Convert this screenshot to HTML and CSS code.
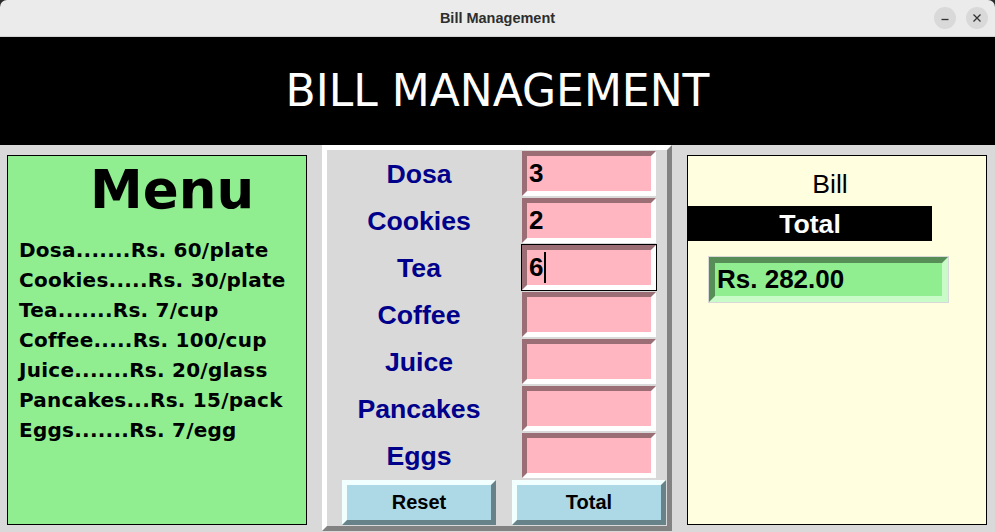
FILE: index.html
```html
<!DOCTYPE html>
<html>
<head>
<meta charset="utf-8">
<title>Bill Management</title>
<link rel="stylesheet" href="styles.css">
</head>
<body>
<div class="titlebar">
  <span class="title">Bill Management</span>
  <div class="wbtns">
    <span class="wbtn"><svg width="10" height="10" viewBox="0 0 10 10"><path d="M1.5 6.5h7" stroke="#333" stroke-width="1.3"/></svg></span>
    <span class="wbtn"><svg width="10" height="10" viewBox="0 0 10 10"><path d="M1.5 1.5l7 7M8.5 1.5l-7 7" stroke="#333" stroke-width="1.3"/></svg></span>
  </div>
</div>
<header class="banner">BILL MANAGEMENT</header>
<main class="main">
  <section class="menu">
    <div class="menu-title">Menu</div>
    <ul class="menu-list">
      <li>Dosa.......Rs. 60/plate</li>
      <li>Cookies.....Rs. 30/plate</li>
      <li>Tea.......Rs. 7/cup</li>
      <li>Coffee.....Rs. 100/cup</li>
      <li>Juice.......Rs. 20/glass</li>
      <li>Pancakes...Rs. 15/pack</li>
      <li>Eggs.......Rs. 7/egg</li>
    </ul>
  </section>
  <section class="order">
    <div class="lbl">Dosa</div><div class="cell"><div class="entry"><div class="field">3</div></div></div>
    <div class="lbl">Cookies</div><div class="cell"><div class="entry"><div class="field">2</div></div></div>
    <div class="lbl">Tea</div><div class="cell"><div class="entry focus"><div class="field">6<span class="caret"></span></div></div></div>
    <div class="lbl">Coffee</div><div class="cell"><div class="entry"><div class="field"></div></div></div>
    <div class="lbl">Juice</div><div class="cell"><div class="entry"><div class="field"></div></div></div>
    <div class="lbl">Pancakes</div><div class="cell"><div class="entry"><div class="field"></div></div></div>
    <div class="lbl">Eggs</div><div class="cell"><div class="entry"><div class="field"></div></div></div>
    <div class="bcell first"><button class="btn">Reset</button></div>
    <div class="bcell"><button class="btn">Total</button></div>
  </section>
  <section class="bill">
    <div class="bill-title">Bill</div>
    <div class="bill-head">Total</div>
    <div class="result"><div class="result-field">Rs. 282.00</div></div>
  </section>
</main>
</body>
</html>
```
FILE: styles.css
```css
* { box-sizing: border-box; }
html, body { margin: 0; padding: 0; }
html { background: #2a2a2a; }
body {
  width: 995px;
  height: 532px;
  overflow: hidden;
  font-family: "Liberation Sans", Arial, sans-serif;
}

.titlebar {
  height: 37px;
  background: #ebebeb;
  border-bottom: 1px solid #d2d2d2;
  border-radius: 7px 7px 0 0;
  display: flex;
  align-items: center;
  justify-content: center;
  position: relative;
}
.title {
  font-family: "Liberation Sans", sans-serif;
  font-weight: bold;
  font-size: 14.5px;
  color: #2e2e2e;
}
.wbtns {
  position: absolute;
  right: 7px;
  top: 7px;
  display: flex;
  gap: 10px;
}
.wbtn {
  width: 22px;
  height: 22px;
  border-radius: 50%;
  background: #d9d9d9;
  display: flex;
  align-items: center;
  justify-content: center;
}

.banner {
  height: 108px;
  background: #000;
  color: #fff;
  font-family: "DejaVu Sans", sans-serif;
  font-size: 44px;
  display: flex;
  align-items: center;
  justify-content: center;
  padding-bottom: 2px;
}

.main {
  height: 387px;
  background: #d9d9d9;
  display: flex;
  align-items: flex-start;
  padding-left: 7px;
  gap: 15px;
}

.menu {
  margin-top: 10px;
  width: 300px;
  height: 370px;
  background: #90ee90;
  border: 1px solid #000;
  font-family: "DejaVu Sans", sans-serif;
  font-weight: bold;
  color: #000;
}
.menu-title {
  font-size: 53px;
  line-height: 62px;
  padding-top: 3px;
  padding-left: 82px;
}
.menu-list {
  list-style: none;
  margin: 14px 0 0 0;
  padding: 0 0 0 11px;
  font-size: 20px;
  line-height: 30px;
  letter-spacing: 0.25px;
}

.order {
  width: 350px;
  height: 386px;
  border: 5px solid;
  border-color: #ffffff #828282 #828282 #ffffff;
  background: #d9d9d9;
  display: grid;
  grid-template-columns: 184px 156px;
  grid-auto-rows: 47px;
}
.lbl {
  display: flex;
  align-items: center;
  justify-content: center;
  padding-top: 1px;
  font-weight: bold;
  font-size: 26.67px;
  color: #00008b;
}
.cell {
  display: flex;
  align-items: center;
  padding-left: 10px;
}
.entry {
  width: 136px;
  height: 47px;
  border: 1px solid #d9d9d9;
}
.entry.focus { border-color: #000; }
.field {
  height: 45px;
  border: 5px solid;
  border-color: #9a6e74 #ffffff #ffffff #9a6e74;
  background: #ffb6c1;
  font-weight: bold;
  font-size: 26px;
  color: #000;
  padding-left: 2px;
  display: flex;
  align-items: center;
}
.caret {
  display: inline-block;
  width: 2px;
  height: 31px;
  background: #000;
  margin-left: 1px;
}
.bcell {
  display: flex;
  align-items: center;
}
.bcell.first { padding-left: 15px; }
.bcell + .bcell { padding-left: 1px; }
.btn {
  width: 154px;
  height: 45px;
  margin: 0;
  padding: 0;
  background: #add8e6;
  border: 5px solid;
  border-color: #f2ffff #68828a #68828a #f2ffff;
  font-family: "Liberation Sans", Arial, sans-serif;
  font-weight: bold;
  font-size: 20px;
  color: #000;
}

.bill {
  margin-top: 10px;
  width: 300px;
  height: 370px;
  background: #ffffe0;
  border: 1px solid #000;
}
.bill-title {
  margin-top: 12px;
  padding-right: 14px;
  text-align: center;
  font-size: 26.67px;
  line-height: 32px;
  color: #000;
}
.bill-head {
  margin-top: 6px;
  width: 244px;
  height: 35px;
  background: #000;
  color: #fff;
  font-weight: bold;
  font-size: 26.67px;
  display: flex;
  align-items: center;
  justify-content: center;
  padding-top: 1px;
}
.result {
  margin: 15px 0 0 20px;
  width: 241px;
  height: 47px;
  border: 1px solid #d9d9d9;
}
.result-field {
  height: 45px;
  border: 6px solid;
  border-color: #578d57 #c9fbc9 #c9fbc9 #578d57;
  background: #90ee90;
  font-weight: bold;
  font-size: 26px;
  color: #000;
  padding-left: 2px;
  display: flex;
  align-items: center;
}
```
